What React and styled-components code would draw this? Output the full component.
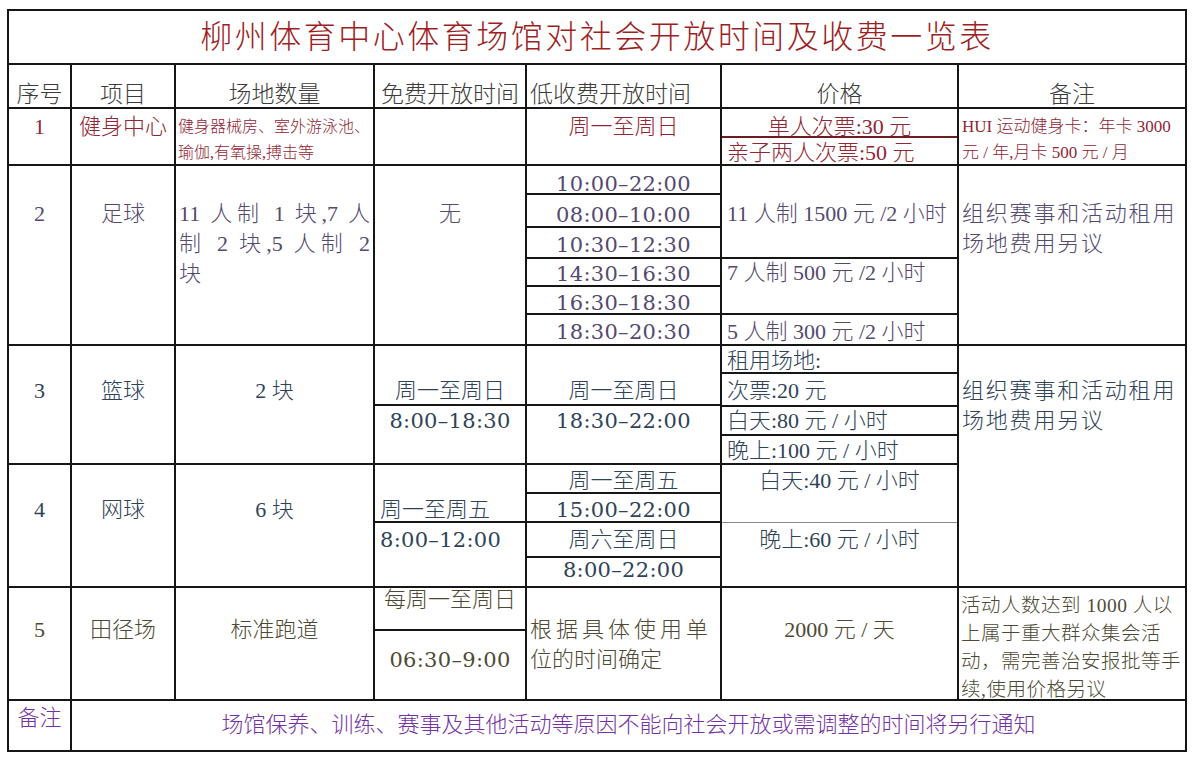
import React from 'react';
import styled, { createGlobalStyle } from 'styled-components';

const GlobalStyle = createGlobalStyle`
  *, *::before, *::after {
    box-sizing: border-box;
  }
  html, body {
    margin: 0;
    padding: 0;
    background: #fff;
  }
  body {
    font-family: "Liberation Serif", "Noto Sans CJK SC", serif;
  }
`;

const Page = styled.div`
  padding: 9px 0 0 7px;
`;

const Sheet = styled.div`
  display: grid;
  grid-template-columns: 61px 102px 197px 150px 193px 235px 226px;
  grid-template-rows: 52px 42px 55px 178px 117px 121px 111px 49px;
  gap: 2px;
  padding: 2px;
  width: max-content;
  font-weight: 300;
  background: #161616;
`;

const Row = styled.div`
  display: contents;
  color: ${p => p.$tone};
`;

const Cell = styled.div`
  background: #fff;
  grid-column: ${p => (p.$span ? `span ${p.$span}` : 'auto')};
  grid-row: ${p => (p.$rows ? `span ${p.$rows}` : 'auto')};
  padding: ${p => p.$top || 0}px ${p => p.$side ?? 0}px 0;
  text-align: ${p => p.$align || 'center'};
  font-size: ${p => p.$size || 22}px;
  line-height: ${p => p.$lh || 30}px;
  letter-spacing: ${p => p.$ls || 0}px;
  white-space: nowrap;
  overflow: hidden;
`;

const Stack = styled.div`
  display: flex;
  flex-direction: column;
  gap: ${p => p.$gap ?? 2}px;
  min-height: 0;
  overflow: hidden;
  background: ${p => p.$line || '#161616'};
`;

const Slot = styled.div`
  flex: ${p => (p.$h ? `0 0 ${p.$h}px` : '1 1 auto')};
  min-height: 0;
  background: #fff;
  padding: ${p => p.$top || 0}px ${p => p.$side ?? 0}px 0;
  text-align: ${p => p.$align || 'center'};
  font-size: 22px;
  line-height: ${p => p.$lh || 26}px;
  white-space: nowrap;
`;

const Line = styled.div`
  white-space: nowrap;
  letter-spacing: ${p => p.$ls || 0}px;
  ${p => p.$justify && 'white-space: normal; text-align: justify; text-align-last: justify;'}
`;

const Time = styled.span`
  font-family: "DejaVu Serif", serif;
  font-size: 21px;
  letter-spacing: 0.3px;
`;

const TITLE = '#9c1f25';
const HEAD = '#3c3c3c';
const GYM = '#8f2734';
const SOCCER = '#54496e';
const COURT = '#2f4358';
const TRACK = '#4d4a34';
const NOTE = '#7433a4';

export default function App() {
  return (
    <Page>
      <GlobalStyle />
      <Sheet>
        <Row $tone={TITLE}>
          <Cell $span={7} $top={6} $lh={40} $size={32} $ls={2.5}>
            柳州体育中心体育场馆对社会开放时间及收费一览表
          </Cell>
        </Row>

        <Row $tone={HEAD}>
          <Cell $top={15} $size={23}>序号</Cell>
          <Cell $top={15} $size={23}>项目</Cell>
          <Cell $top={15} $size={23}>场地数量</Cell>
          <Cell $top={15} $size={23}>免费开放时间</Cell>
          <Cell $top={15} $size={23} $align="left" $side={3}>低收费开放时间</Cell>
          <Cell $top={15} $size={23}>价格</Cell>
          <Cell $top={15} $size={23}>备注</Cell>
        </Row>

        <Row $tone={GYM}>
          <Cell $top={3}>1</Cell>
          <Cell $top={3}>健身中心</Cell>
          <Cell $top={5} $lh={26} $size={16} $align="left" $side={2}>
            健身器械房、室外游泳池、<br />瑜伽,有氧操,搏击等
          </Cell>
          <Cell />
          <Cell $top={3}>周一至周日</Cell>
          <Stack $line="#6e1c22">
            <Slot $h={27} $top={7} $lh={22}>单人次票:30 元</Slot>
            <Slot $top={2} $align="left" $side={5}>亲子两人次票:50 元</Slot>
          </Stack>
          <Cell $top={5} $lh={26} $size={17} $align="left" $side={3}>
            HUI 运动健身卡：年卡 3000<br />元 / 年,月卡 500 元 / 月
          </Cell>
        </Row>

        <Row $tone={SOCCER}>
          <Cell $top={33}>2</Cell>
          <Cell $top={33}>足球</Cell>
          <Cell $top={33} $align="left" $side={3}>
            <Line $justify>11 人制 1 块,7 人</Line>
            <Line $justify>制 2 块,5 人制 2</Line>
            <Line>块</Line>
          </Cell>
          <Cell $top={33}>无</Cell>
          <Stack>
            <Slot $h={27} $top={5}><Time>10:00–22:00</Time></Slot>
            <Slot $h={31} $top={7}><Time>08:00–10:00</Time></Slot>
            <Slot $h={29} $top={4}><Time>10:30–12:30</Time></Slot>
            <Slot $h={26} $top={2}><Time>14:30–16:30</Time></Slot>
            <Slot $h={26} $top={3}><Time>16:30–18:30</Time></Slot>
            <Slot $top={4}><Time>18:30–20:30</Time></Slot>
          </Stack>
          <Stack>
            <Slot $h={91} $top={33} $lh={30} $align="left" $side={5}>11 人制 1500 元 /2 小时</Slot>
            <Slot $h={54} $top={0} $lh={28} $align="left" $side={5}>7 人制 500 元 /2 小时</Slot>
            <Slot $top={3} $lh={28} $align="left" $side={5}>5 人制 300 元 /2 小时</Slot>
          </Stack>
          <Cell $top={33} $align="left" $side={3} $ls={1.8}>
            组织赛事和活动租用<br />场地费用另议
          </Cell>
        </Row>

        <Row $tone={COURT}>
          <Cell $top={30}>3</Cell>
          <Cell $top={30}>篮球</Cell>
          <Cell $top={30}>2 块</Cell>
          <Stack>
            <Slot $h={58} $top={30} $lh={30}>周一至周日</Slot>
            <Slot $lh={30}><Time>8:00–18:30</Time></Slot>
          </Stack>
          <Stack>
            <Slot $h={58} $top={30} $lh={30}>周一至周日</Slot>
            <Slot $lh={30}><Time>18:30–22:00</Time></Slot>
          </Stack>
          <Stack>
            <Slot $h={26} $top={2} $align="left" $side={5}>租用场地:</Slot>
            <Slot $h={31} $top={4} $align="left" $side={5}>次票:20 元</Slot>
            <Slot $h={27} $top={1} $align="left" $side={5}>白天:80 元 / 小时</Slot>
            <Slot $top={2} $align="left" $side={5}>晚上:100 元 / 小时</Slot>
          </Stack>
          <Cell $rows={2} $top={30} $align="left" $side={3} $ls={1.8}>
            组织赛事和活动租用<br />场地费用另议
          </Cell>
        </Row>

        <Row $tone={COURT}>
          <Cell $top={30}>4</Cell>
          <Cell $top={30}>网球</Cell>
          <Cell $top={30}>6 块</Cell>
          <Stack>
            <Slot $h={56} $top={30} $lh={30} $align="left" $side={5}>周一至周五</Slot>
            <Slot $top={2} $lh={30} $align="left" $side={5}><Time>8:00–12:00</Time></Slot>
          </Stack>
          <Stack>
            <Slot $h={27} $top={3}>周一至周五</Slot>
            <Slot $h={27} $top={3}><Time>15:00–22:00</Time></Slot>
            <Slot $h={33} $top={4}>周六至周日</Slot>
            <Slot $top={0} $lh={24}><Time>8:00–22:00</Time></Slot>
          </Stack>
          <Stack $line="#8a8a8a" $gap={1}>
            <Slot $h={57} $top={1} $lh={30}>白天:40 元 / 小时</Slot>
            <Slot $top={2} $lh={30}>晚上:60 元 / 小时</Slot>
          </Stack>
        </Row>

        <Row $tone={TRACK}>
          <Cell $top={27}>5</Cell>
          <Cell $top={27}>田径场</Cell>
          <Cell $top={27}>标准跑道</Cell>
          <Stack>
            <Slot $h={41} $top={0} $lh={24}>每周一至周日</Slot>
            <Slot $top={14} $lh={30}><Time>06:30–9:00</Time></Slot>
          </Stack>
          <Cell $top={27} $align="left" $side={3}>
            <Line $ls={4}>根据具体使用单</Line>
            <Line>位的时间确定</Line>
          </Cell>
          <Cell $top={27}>2000 元 / 天</Cell>
          <Cell $top={4} $lh={28} $size={19.5} $align="left" $side={2} $ls={0.5}>
            活动人数达到 1000 人以<br />上属于重大群众集会活<br />动，需完善治安报批等手<br />续,使用价格另议
          </Cell>
        </Row>

        <Row $tone={NOTE}>
          <Cell $top={2}>备注</Cell>
          <Cell $span={6} $top={9}>
            场馆保养、训练、赛事及其他活动等原因不能向社会开放或需调整的时间将另行通知
          </Cell>
        </Row>
      </Sheet>
    </Page>
  );
}
